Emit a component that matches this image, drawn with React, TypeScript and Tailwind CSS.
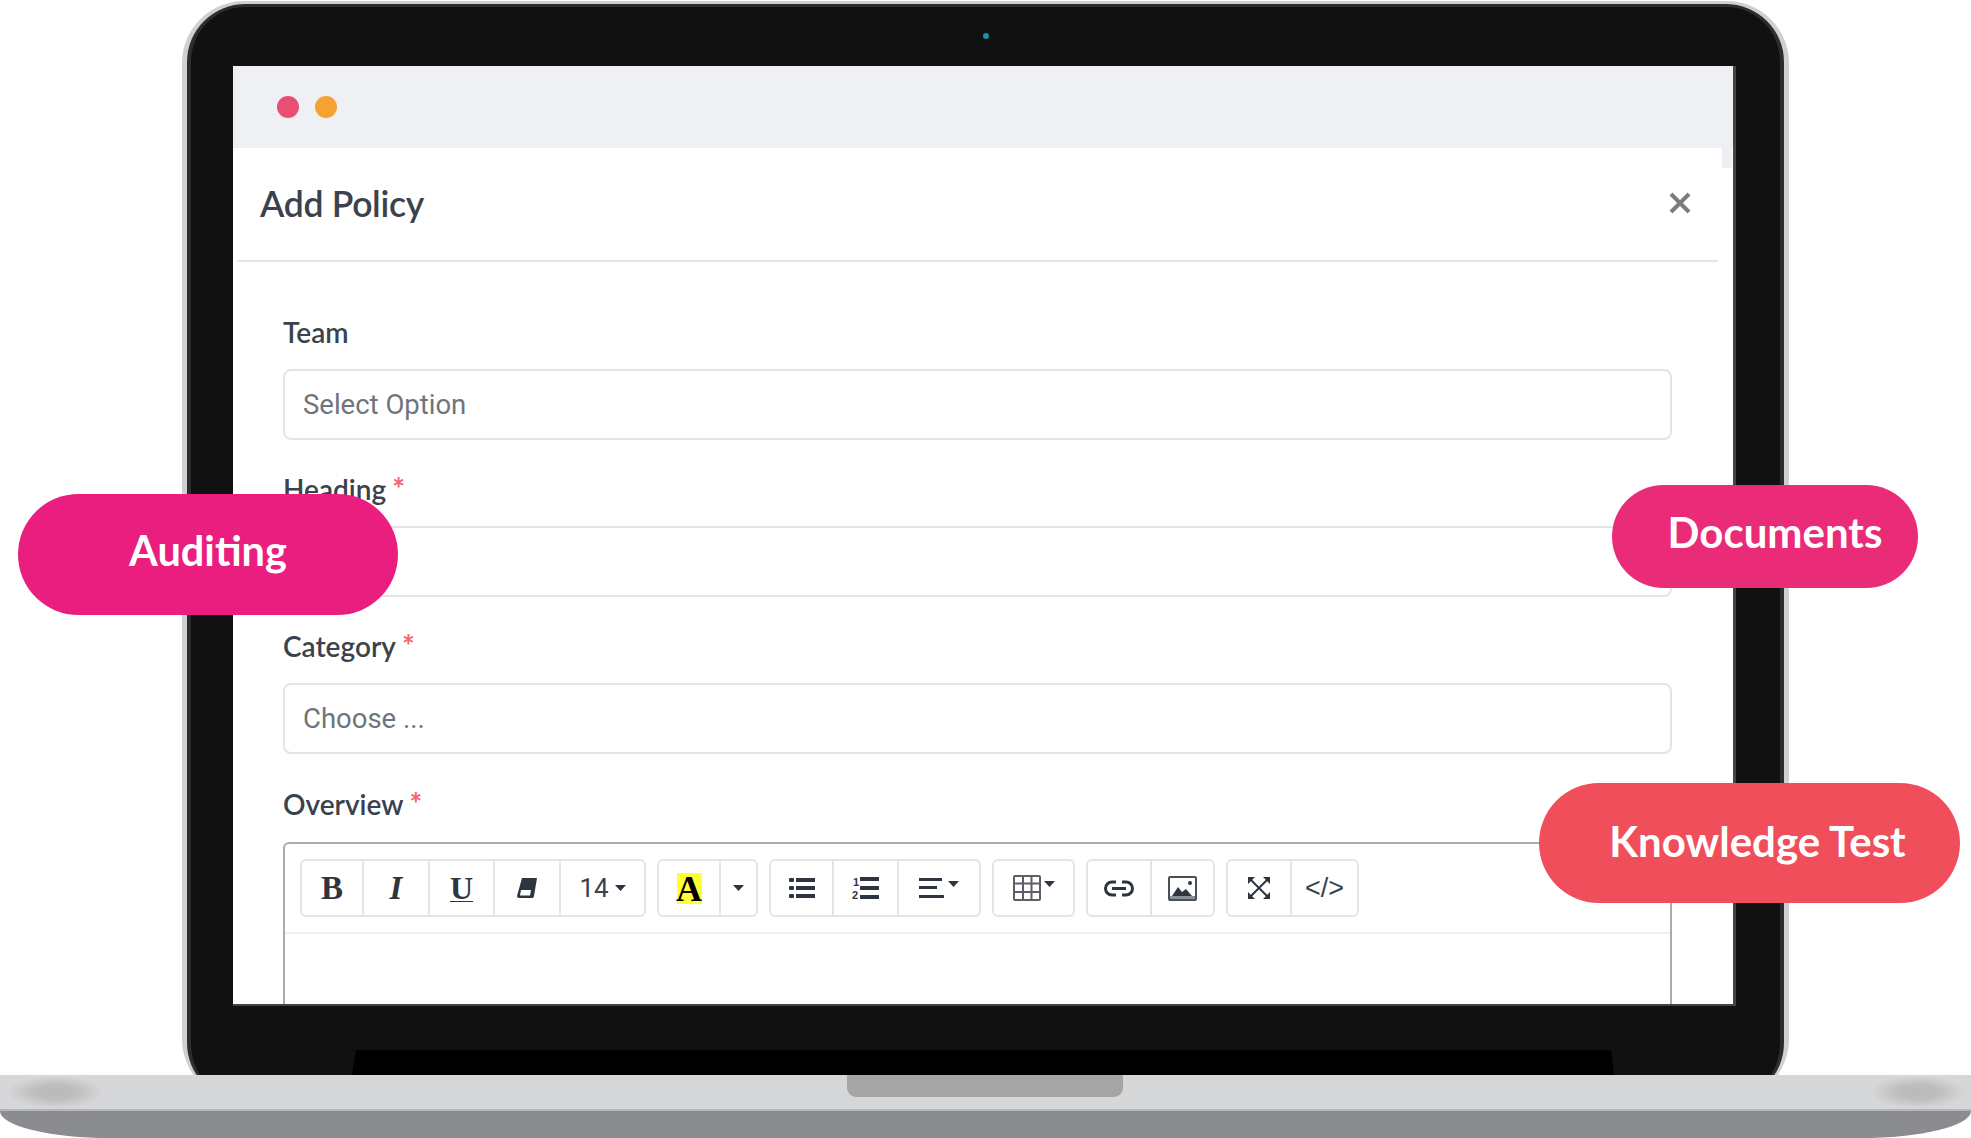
import { type ReactNode } from "react";

const LATO = "font-['Lato','Liberation_Sans',sans-serif]";

const Dropcaret = ({ className = "" }: { className?: string }) => (
  <svg width="11" height="6" viewBox="0 0 11 6" className={className}>
    <path d="M0 0h11L5.500 6z" fill="#2f3540" />
  </svg>
);

function Field({ label, required, placeholder }: { label: string; required?: boolean; placeholder?: string }) {
  return (
    <div className="flex flex-col">
      <label className="h-[55px] flex items-start text-[28px] leading-[36px] font-semibold text-[#3c424d]">
        {label}
        {required && <span className="ml-[6px] mt-[2px] text-[#f0656f] text-[30px] font-bold leading-[30px]">*</span>}
      </label>
      <div className="h-[71px] rounded-lg border-2 border-[#e3e4ea] flex items-center px-[18px] text-[27.500px] text-[#6f757c] font-['Roboto',sans-serif]">
        {placeholder}
      </div>
    </div>
  );
}

function Btn({ w, last, children }: { w: string; last?: boolean; children: ReactNode }) {
  return (
    <div className={`${w} h-full flex items-center justify-center ${last ? "" : "border-r-2 border-[#e3e5ea]"}`}>
      {children}
    </div>
  );
}

function Group({ children }: { children: ReactNode }) {
  return <div className="h-[58px] flex rounded-md border-2 border-[#e3e5ea]">{children}</div>;
}

function Toolbar() {
  return (
    <div className="h-[90px] border-b-2 border-[#eef0f3] pt-[15px] pl-[15px] flex gap-[11px] text-[#2f3540]">
      <Group>
        <Btn w="w-[62px]"><span className="font-['Liberation_Serif',serif] font-bold text-[33px] leading-none">B</span></Btn>
        <Btn w="w-[66px]"><span className="font-['Liberation_Serif',serif] font-bold italic text-[33px] leading-none">I</span></Btn>
        <Btn w="w-[65px]"><span className="font-['Liberation_Serif',serif] font-bold text-[32px] leading-none underline underline-offset-2 decoration-1">U</span></Btn>
        <Btn w="w-[66px]">
          <svg width="22" height="22" viewBox="0 0 22 22">
            <path d="M6 1h15l-3 18a2 2 0 0 1-2 2H3a2 2 0 0 1-2-2z" fill="#2f3540" />
            <path d="M5 13h10l-1 5.500H4z" fill="#fff" />
          </svg>
        </Btn>
        <Btn w="w-[83px]" last>
          <span className="text-[26px] font-['Roboto',sans-serif] mr-[6px] text-[#3a4250]">14</span>
          <Dropcaret />
        </Btn>
      </Group>
      <Group>
        <Btn w="w-[62px]">
          <span className="w-[25px] h-[31px] bg-[#ffff33] text-black font-['Liberation_Serif',serif] font-bold text-[36px] leading-[33px] flex justify-center">A</span>
        </Btn>
        <Btn w="w-[35px]" last><Dropcaret /></Btn>
      </Group>
      <Group>
        <Btn w="w-[63px]">
          <svg width="26" height="22" viewBox="0 0 26 22" fill="#2f3540">
            <rect x="0" y="1" width="5" height="4" rx="1" /><rect x="7" y="1" width="19" height="4" />
            <rect x="0" y="9" width="5" height="4" rx="1" /><rect x="7" y="9" width="19" height="4" />
            <rect x="0" y="17" width="5" height="4" rx="1" /><rect x="7" y="17" width="19" height="4" />
          </svg>
        </Btn>
        <Btn w="w-[65px]">
          <svg width="27" height="24" viewBox="0 0 27 24" fill="#2f3540">
            <rect x="8" y="1" width="19" height="4" /><rect x="8" y="10" width="19" height="4" /><rect x="8" y="19" width="19" height="4" />
            <text x="1" y="10" fontSize="11" fontWeight="700" fontFamily="Liberation Sans">1</text>
            <text x="0" y="23" fontSize="11" fontWeight="700" fontFamily="Liberation Sans">2</text>
          </svg>
        </Btn>
        <Btn w="w-[80px]" last>
          <svg width="25" height="22" viewBox="0 0 25 22" fill="#2f3540" className="mr-[4px]">
            <rect x="0" y="1" width="23" height="3" /><rect x="0" y="9" width="18" height="3" /><rect x="0" y="18" width="25" height="3" />
          </svg>
          <Dropcaret className="-mt-2" />
        </Btn>
      </Group>
      <Group>
        <Btn w="w-[79px]" last>
          <svg width="28" height="26" viewBox="0 0 28 26" fill="none" stroke="#5a5f68" strokeWidth="2" className="mr-[3px]">
            <rect x="1" y="1" width="26" height="24" rx="1" />
            <path d="M1 8.500h26M1 17h26M10 1v24M18.500 1v24" />
          </svg>
          <Dropcaret className="-mt-2" />
        </Btn>
      </Group>
      <Group>
        <Btn w="w-[64px]">
          <svg width="30" height="17" viewBox="0 0 30 17" fill="none" stroke="#2f3540" strokeWidth="3">
            <path d="M12 2H8a6.500 6.500 0 0 0 0 13h4M18 2h4a6.500 6.500 0 0 1 0 13h-4M8 8.500h14" />
          </svg>
        </Btn>
        <Btn w="w-[61px]" last>
          <svg width="29" height="25" viewBox="0 0 29 25">
            <rect x="1" y="1" width="27" height="23" rx="1" fill="none" stroke="#4a4e56" strokeWidth="2" />
            <path d="M4 20l6-9 4 5 4-3 6 7z" fill="#2f3540" />
            <circle cx="22" cy="7" r="2" fill="#2f3540" />
            <rect x="2" y="20" width="25" height="3" fill="#8b8f96" />
          </svg>
        </Btn>
      </Group>
      <Group>
        <Btn w="w-[64px]">
          <svg width="24" height="24" viewBox="0 0 24 24" fill="#2f3540" stroke="#2f3540">
            <path d="M3.500 3.500l17 17M20.500 3.500l-17 17" strokeWidth="2" fill="none" />
            <path d="M1 1h7L1 8zM23 1h-7l7 7zM1 23h7l-7-7zM23 23h-7l7-7z" strokeWidth="0" />
          </svg>
        </Btn>
        <Btn w="w-[65px]" last>
          <span className="text-[27px] font-['Liberation_Sans',sans-serif] text-[#3a4250]">&lt;/&gt;</span>
        </Btn>
      </Group>
    </div>
  );
}

function Pill({ className, children }: { className: string; children: ReactNode }) {
  return (
    <div className={`absolute flex items-center justify-center rounded-full text-white font-bold ${LATO} ${className}`}>
      {children}
    </div>
  );
}

export default function App() {
  return (
    <div className={`relative w-[1971px] h-[1138px] bg-white overflow-hidden ${LATO}`}>
      {/* lid, clipped where it meets the hinge */}
      <div className="h-[1075px] overflow-hidden pt-[1px] pl-[182px] pr-[182px]">
        <div className="h-[1100px] rounded-[62px] border-x-[5px] border-t-[3px] border-[#cfd0d2]">
          <div className="relative h-full rounded-[58px] border-x-[4px] border-t-[3px] border-[#2c2d31] bg-[#111111] pt-[59px] pl-[42px] pr-[44px]">
            <div className="absolute left-1/2 -translate-x-1/2 top-[26px] w-[6px] h-[6px] rounded-full bg-[#1a93a8]" />
            {/* screen */}
            <div className="relative h-[940px] bg-white border-r-[3px] border-b-2 border-[#444444] flex flex-col overflow-hidden">
              <div className="h-[82px] shrink-0 bg-[#eff0f4] flex items-center pl-[44px] gap-[16px]">
                <span className="w-[22px] h-[22px] rounded-full bg-[#e84f75]" />
                <span className="w-[22px] h-[22px] rounded-full bg-[#f6a233]" />
              </div>
              <div className="absolute top-[80px] right-[1px] w-[10px] h-[22px] bg-[#eeeff3]" />
              <div className="h-[114px] shrink-0 ml-[4px] mr-[15px] border-b-2 border-[#e4e4ea] flex items-center justify-between pl-[23px] pr-[27px]">
                <h1 className="text-[35.500px] font-semibold tracking-[-0.3px] text-[#3c424d]">Add Policy</h1>
                <svg width="22" height="22" viewBox="0 0 22 22" stroke="#7c7c7c" strokeWidth="4" className="-mt-[2px]">
                  <path d="M2 2l18 18M20 2L2 20" />
                </svg>
              </div>
              <form className="flex flex-col gap-[31px] pt-[52px] pl-[50px] pr-[61px]">
                <Field label="Team" placeholder="Select Option" />
                <Field label="Heading" required />
                <Field label="Category" required placeholder="Choose ..." />
                <div className="flex flex-col">
                  <label className="h-[57px] text-[28px] leading-[36px] font-semibold text-[#3c424d]">
                    Overview<span className="ml-[6px] text-[#f0656f] text-[30px] font-bold">*</span>
                  </label>
                  <div className="h-[300px] rounded-t-md border-x-2 border-t-2 border-[#ababab]">
                    <Toolbar />
                  </div>
                </div>
              </form>
            </div>
            {/* hinge cutout */}
            <div className="absolute bottom-[26px] left-[161px] right-[166px] h-[25px] bg-black [clip-path:polygon(4px_0,calc(100%-3px)_0,100%_100%,0_100%)]" />
          </div>
        </div>
      </div>
      {/* base */}
      <div className="relative h-[36px] bg-[#d6d7d9] border-b-2 border-[#b5b6b8]">
        <div className="absolute left-[847px] top-0 w-[276px] h-[22px] bg-[#a5a5a5] rounded-b-[9px]" />
        <div className="absolute left-[5px] top-0 w-[100px] h-full bg-[radial-gradient(ellipse_at_center,#b9b9b9_0%,#bebebe_30%,#d6d7d9_68%)]" />
        <div className="absolute left-[1868px] top-0 w-[100px] h-full bg-[radial-gradient(ellipse_at_center,#b9b9b9_0%,#bebebe_30%,#d6d7d9_68%)]" />
      </div>
      <div className="h-[27px] bg-[#8b8c8f] rounded-b-[110px_27px]" />

      <Pill className="left-[18px] top-[494px] w-[380px] h-[121px] bg-[#e91e7f] text-[41.500px] pb-[9px]">Auditing</Pill>
      <Pill className="left-[1612px] top-[485px] w-[306px] h-[103px] bg-[#e92b78] text-[42px] pb-[8px] pl-[20px]">Documents</Pill>
      <Pill className="left-[1539px] top-[783px] w-[421px] h-[120px] bg-[#ef4e5a] text-[42px] pb-[4px] pl-[16px]">Knowledge Test</Pill>
    </div>
  );
}
